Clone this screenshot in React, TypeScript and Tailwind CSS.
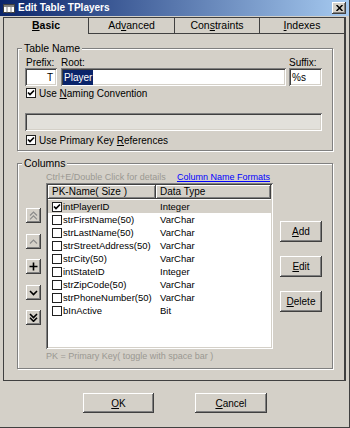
import React from "react";

const raised =
  "bg-[#d4d0c8] shadow-[inset_-1px_-1px_0_#404040,inset_1px_1px_0_#ffffff,inset_-2px_-2px_0_#808080]";
const sunken =
  "shadow-[inset_1px_1px_0_#808080,inset_-1px_-1px_0_#ffffff,inset_2px_2px_0_#404040,inset_-2px_-2px_0_#d4d0c8]";
const etched = "border border-[#808080] shadow-[1px_1px_0_#ffffff,inset_1px_1px_0_#ffffff]";

const columns: [string, string, boolean][] = [
  ["intPlayerID", "Integer", true],
  ["strFirstName(50)", "VarChar", false],
  ["strLastName(50)", "VarChar", false],
  ["strStreetAddress(50)", "VarChar", false],
  ["strCity(50)", "VarChar", false],
  ["intStateID", "Integer", false],
  ["strZipCode(50)", "VarChar", false],
  ["strPhoneNumber(50)", "VarChar", false],
  ["bInActive", "Bit", false],
];

function Check({ checked }: { checked?: boolean }) {
  return (
    <span className="flex h-[10px] w-[10px] shrink-0 items-center justify-center border border-[#202020] bg-white">
      {checked && (
        <svg width="8" height="8" viewBox="0 0 8 8">
          <path d="M1 3.5 L3 5.6 L7 1.5" stroke="#000" strokeWidth="1.7" fill="none" />
        </svg>
      )}
    </span>
  );
}

function Chevrons({ dir, count, disabled }: { dir: "up" | "down"; count: number; disabled?: boolean }) {
  const color = disabled ? "#8a8a8a" : "#000";
  const one = dir === "up" ? "M1 4.5 L4.5 1 L8 4.5" : "M1 1 L4.5 4.5 L8 1";
  const h = count === 2 ? 9 : 6;
  return (
    <svg width="9" height={h} viewBox={`0 0 9 ${h}`}>
      <path d={one} stroke={color} strokeWidth={disabled ? 1.1 : 1.6} fill="none" />
      {count === 2 && (
        <path d={one} transform="translate(0 3.8)" stroke={color} strokeWidth={disabled ? 1.1 : 1.6} fill="none" />
      )}
    </svg>
  );
}

function SmallButton({ children, top }: { children: React.ReactNode; top: string }) {
  return <div className={`${raised} ${top} flex h-[15px] w-[15px] items-center justify-center`}>{children}</div>;
}

export default function App() {
  return (
    <div className="flex h-[428px] w-[350px] flex-col overflow-hidden border-r border-b border-[#404040] bg-[#d4d0c8] font-['Liberation_Sans',Arial,sans-serif] text-black">
      {/* title bar */}
      <div className="flex h-[16px] items-center bg-[linear-gradient(to_right,#0a246a,#a6caf0)] pl-[3px] pr-[3px]">
        <svg width="12" height="9" viewBox="0 0 12 9">
          <rect x="0.5" y="0.5" width="11" height="8" fill="#fff" stroke="#404040" />
          <rect x="1" y="1" width="10" height="2" fill="#808080" />
          <path d="M4 1 V8.5 M8 1 V8.5" stroke="#808080" />
        </svg>
        <span className="ml-[3px] text-[10px] leading-none font-bold text-white">Edit Table TPlayers</span>
        <div className={`${raised} ml-auto flex h-[12px] w-[14px] items-center justify-center`}>
          <svg width="7" height="6" viewBox="0 0 7 6">
            <path d="M0.5 0 L6.5 6 M6.5 0 L0.5 6" stroke="#000" strokeWidth="1.5" />
          </svg>
        </div>
      </div>

      {/* tabs */}
      <div className="mt-[1px] ml-[3px] flex h-[17px] text-[10.5px]">
        <div className="flex w-[85px] items-center justify-center border-t border-l border-[#404040] font-bold">
          <span>
            <span className="underline">B</span>asic
          </span>
        </div>
        <div className="flex w-[86px] items-center justify-center border-t border-l border-b border-[#404040]">
          <span>
            Ad<span className="underline">v</span>anced
          </span>
        </div>
        <div className="flex w-[85px] items-center justify-center border-t border-l border-b border-[#404040]">
          <span>
            Con<span className="underline">s</span>traints
          </span>
        </div>
        <div className="flex w-[87px] items-center justify-center border-t border-l border-r-2 border-b border-[#404040]">
          <span>
            <span className="underline">I</span>ndexes
          </span>
        </div>
      </div>

      {/* tab panel */}
      <div className="ml-[3px] h-[347px] w-[343px] border-l border-r-2 border-b border-[#404040] pt-[14px] text-[10px]">
        {/* Table Name group */}
        <div className={`ml-[13px] h-[103px] w-[316px] ${etched}`}>
          <div className="-mt-[6px] ml-[4px] w-fit bg-[#d4d0c8] px-[2px] text-[10.5px] leading-[11px]">Table Name</div>
          <div className="px-[7px]">
            <div className="mt-[3px] flex h-[11px] items-center leading-none">
              <span className="w-[32px] pl-[1px]">Prefix:</span>
              <span className="ml-[4px] w-[225px]">Root:</span>
              <span className="ml-[3px]">Suffix:</span>
            </div>
            <div className="flex h-[18px]">
              <div className={`flex w-[32px] items-center justify-end bg-white pr-[4px] ${sunken}`}>T</div>
              <div className={`ml-[4px] flex w-[225px] items-center bg-white pl-[2px] ${sunken}`}>
                <span className="bg-[#0a246a] px-[1px] text-white">Player</span>
              </div>
              <div className={`ml-[3px] flex w-[33px] items-center bg-white pl-[3px] ${sunken}`}>%s</div>
            </div>
            <div className="mt-[1px] flex h-[12px] items-center gap-[3px] pl-[1px]">
              <Check checked />
              <span>
                Use <span className="underline">N</span>aming Convention
              </span>
            </div>
            <div className={`mt-[14px] h-[18px] w-[297px] bg-[#e2e0db] ${sunken}`} />
            <div className="mt-[3px] flex h-[12px] items-center gap-[3px] pl-[1px]">
              <Check checked />
              <span>
                Use Primary Key <span className="underline">R</span>eferences
              </span>
            </div>
          </div>
        </div>

        {/* Columns group */}
        <div className={`mt-[12px] ml-[13px] h-[206px] w-[316px] ${etched}`}>
          <div className="-mt-[6px] ml-[4px] w-fit bg-[#d4d0c8] px-[2px] text-[10.5px] leading-[11px]">Columns</div>
          <div className="pl-[8px]">
            <div className="mt-[3px] ml-[20px] flex h-[11px] w-[227px] items-center justify-between pr-[3px] text-[9px] leading-none">
              <span className="text-[#9a9892]">Ctrl+E/Double Click for details</span>
              <span className="text-[#0000ff] underline">Column Name Formats</span>
            </div>
            <div className="flex">
              <div className="flex w-[15px] flex-col">
                <SmallButton top="mt-[25px]">
                  <Chevrons dir="up" count={2} disabled />
                </SmallButton>
                <SmallButton top="mt-[11px]">
                  <Chevrons dir="up" count={1} disabled />
                </SmallButton>
                <SmallButton top="mt-[10px]">
                  <svg width="9" height="9" viewBox="0 0 9 9">
                    <path d="M4.5 0.5 V8.5 M0.5 4.5 H8.5" stroke="#000" strokeWidth="1.6" />
                  </svg>
                </SmallButton>
                <SmallButton top="mt-[11px]">
                  <Chevrons dir="down" count={1} />
                </SmallButton>
                <SmallButton top="mt-[10px]">
                  <Chevrons dir="down" count={2} />
                </SmallButton>
              </div>
              <div className={`ml-[5px] flex h-[166px] w-[227px] flex-col bg-white p-[2px] ${sunken}`}>
                <div className="flex h-[14px] shrink-0 leading-none">
                  <div className={`${raised} flex w-[108px] items-center pl-[4px]`}>PK-Name( Size )</div>
                  <div className={`${raised} flex flex-1 items-center pl-[4px]`}>Data Type</div>
                </div>
                <div className="mt-[1px] text-[9.5px] leading-none">
                  {columns.map(([name, type, pk], i) => (
                    <div key={name} className={`flex h-[13px] items-center ${i === 0 ? "bg-[#d4d0c8]" : ""}`}>
                      <div className="flex w-[108px] items-center gap-[1px] pl-[4px]">
                        <Check checked={pk} />
                        <span>{name}</span>
                      </div>
                      <div className="pl-[4px]">{type}</div>
                    </div>
                  ))}
                </div>
              </div>
              <div className="ml-[7px] flex w-[42px] flex-col">
                <div className={`${raised} mt-[38px] flex h-[21px] items-center justify-center`}>
                  <span>
                    <span className="underline">A</span>dd
                  </span>
                </div>
                <div className={`${raised} mt-[14px] flex h-[21px] items-center justify-center`}>
                  <span>
                    <span className="underline">E</span>dit
                  </span>
                </div>
                <div className={`${raised} mt-[14px] flex h-[21px] items-center justify-center`}>
                  <span>
                    <span className="underline">D</span>elete
                  </span>
                </div>
              </div>
            </div>
            <div className="mt-[1px] ml-[20px] flex h-[12px] items-center text-[9px] leading-none text-[#9a9892]">
              PK = Primary Key( toggle with space bar )
            </div>
          </div>
        </div>
      </div>

      {/* dialog buttons */}
      <div className="mt-[12px] flex h-[20px] text-[10px]">
        <div className={`${raised} ml-[83px] flex w-[71px] items-center justify-center`}>
          <span>
            <span className="underline">O</span>K
          </span>
        </div>
        <div className={`${raised} ml-[41px] flex w-[72px] items-center justify-center`}>
          <span>
            <span className="underline">C</span>ancel
          </span>
        </div>
      </div>
    </div>
  );
}
